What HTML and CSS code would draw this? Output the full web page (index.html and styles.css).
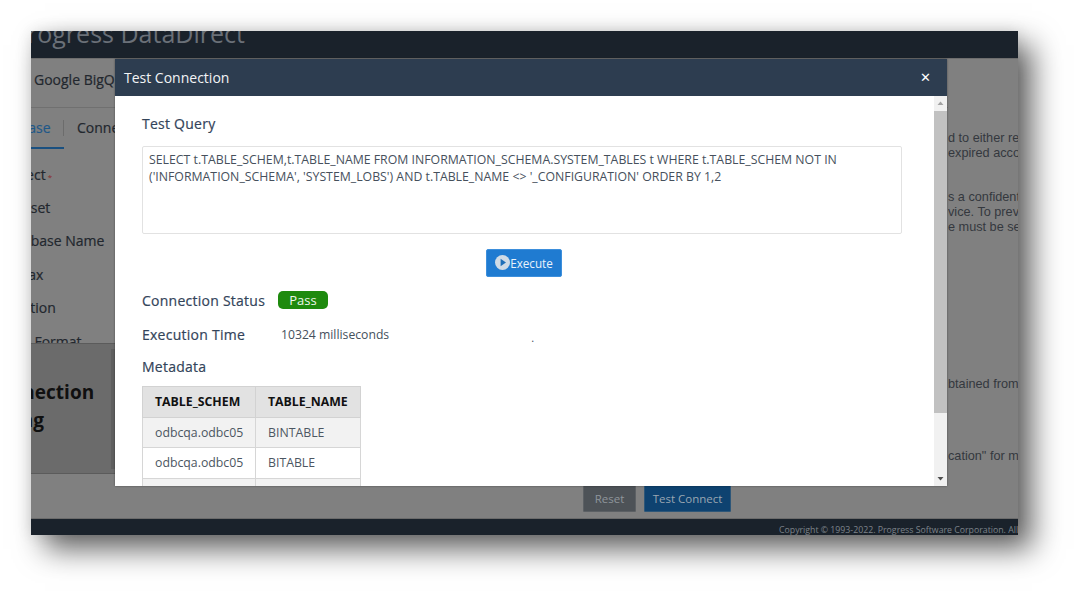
FILE: index.html
```html
<!DOCTYPE html>
<html lang="en">
<head>
<meta charset="utf-8">
<title>Test Connection</title>
<link rel="stylesheet" href="styles.css">
</head>
<body>
<div class="frame">
  <header class="topbar"><span class="brand">Progress DataDirect</span></header>
  <div class="page">
    <div class="columns">
      <div class="left">
        <div class="crumb">Google BigQuery</div>
        <nav class="tabs"><span class="tab active">Database</span><span class="tab">Connection</span></nav>
        <ul class="fields">
          <li>Project<i class="req">*</i></li>
          <li>Dataset</li>
          <li>Database Name</li>
          <li>Syntax</li>
          <li>Location</li>
          <li class="last">Date Format</li>
        </ul>
        <div class="promo"><span class="promo-line">Connection</span><span class="promo-line second">Testing</span></div>
      </div>
      <div class="right">
        <p class="note n1">d to either renew<br>expired accounts</p>
        <p class="note n2">s a confidential<br>vice. To prevent<br>e must be secured</p>
        <p class="note n3">btained from</p>
        <p class="note n4">cation" for more</p>
      </div>
    </div>
    <div class="actions"><button class="btn reset">Reset</button><button class="btn connect">Test Connect</button></div>
  </div>
  <footer class="bottombar">Copyright © 1993-2022. Progress Software Corporation. All rights reserved.</footer>
  <section class="modal">
    <div class="modal-head"><span>Test Connection</span><span class="close">✕</span></div>
    <div class="modal-main">
      <div class="modal-body">
        <h2 class="h-query">Test Query</h2>
        <div class="query">SELECT t.TABLE_SCHEM,t.TABLE_NAME FROM INFORMATION_SCHEMA.SYSTEM_TABLES t WHERE t.TABLE_SCHEM NOT IN ('INFORMATION_SCHEMA', 'SYSTEM_LOBS') AND t.TABLE_NAME &lt;&gt; '_CONFIGURATION' ORDER BY 1,2</div>
        <div class="exec-row">
          <button class="exec">
            <svg class="play" width="15" height="15" viewBox="0 0 15 15"><circle cx="7.5" cy="7.5" r="7.5" fill="#cfdbe6"/><path d="M5.6 3.8 11 7.5 5.6 11.2Z" fill="#1f6fb8"/></svg>Execute
          </button>
        </div>
        <div class="status-row"><h2 class="status-label">Connection Status</h2><span class="badge">Pass</span></div>
        <div class="time-row"><h2 class="time-label">Execution Time</h2><span class="time">10324 milliseconds</span><span class="dot">.</span></div>
        <h2 class="h-meta">Metadata</h2>
        <table class="grid">
          <thead><tr><th>TABLE_SCHEM</th><th>TABLE_NAME</th></tr></thead>
          <tbody>
            <tr><td>odbcqa.odbc05</td><td>BINTABLE</td></tr>
            <tr><td>odbcqa.odbc05</td><td>BITABLE</td></tr>
            <tr><td>odbcqa.odbc05</td><td>BLOBTABLE</td></tr>
          </tbody>
        </table>
      </div>
      <div class="scroll">
        <svg class="arrow" width="13" height="15" viewBox="0 0 13 15"><path d="M3.5 9 6.5 5.5 9.5 9Z" fill="#a3a3a3"/></svg>
        <div class="thumb-track"><div class="thumb"></div></div>
        <svg class="arrow" width="13" height="15" viewBox="0 0 13 15"><path d="M3.5 6 6.5 9.5 9.5 6Z" fill="#505050"/></svg>
      </div>
    </div>
  </section>
</div>
</body>
</html>
```

FILE: styles.css
```css
* { box-sizing: border-box; }
html, body { margin: 0; height: 100%; overflow: hidden; background: #fff; }
body { padding: 31px 0 0 31px; font-family: "Open Sans", sans-serif; }
h2 { margin: 0; font-size: 14px; font-weight: 500; color: #33445a; letter-spacing: .25px; -webkit-text-stroke: .2px #33445a; white-space: nowrap; }
p, ul { margin: 0; padding: 0; }
ul { list-style: none; }

.frame {
  position: relative;
  width: 987px;
  height: 504px;
  display: flex;
  flex-direction: column;
  background: #808080;
  box-shadow: 14px 14px 28px rgba(0,0,0,.62), 0 0 14px rgba(0,0,0,.1);
}
.topbar {
  height: 27px;
  flex: none;
  background: #1a222b;
  overflow: hidden;
}
.brand {
  display: block;
  margin: -16px 0 0 -19px;
  font-size: 25px;
  line-height: 36px;
  color: #6a7078;
  white-space: nowrap;
}
.page {
  flex: 1;
  min-height: 0;
  display: flex;
  flex-direction: column;
  border-top: 1px solid #6e6e6e;
  overflow: hidden;
}
.columns { flex: 1; min-height: 0; display: flex; }
.left { width: 917px; flex: none; display: flex; flex-direction: column; overflow: hidden; }
.crumb {
  flex: none;
  height: 49px;
  padding: 11px 0 0 3px;
  font-size: 14px;
  font-weight: 500;
  -webkit-text-stroke: .2px #22272e;
  line-height: 20px;
  color: #22272e;
  border-bottom: 1px solid #707070;
  white-space: nowrap;
}
.tabs {
  flex: none;
  height: 41px;
  display: flex;
  margin-left: -42px;
  font-size: 14px;
  font-weight: 500;
}
.tab { padding: 10px 14px 0 13px; line-height: 20px; color: #22272e; -webkit-text-stroke: .2px currentColor; white-space: nowrap; }
.tab.active { width: 75px; padding: 10px 0 0 0; color: #1f5888; border-bottom: 2px solid #1a5080; }
.tab + .tab { position: relative; }
.tab + .tab::before { content: ""; position: absolute; left: -1px; top: 12px; width: 1px; height: 16px; background: #6c6c6c; }

.fields {
  height: 194px;
  flex: none;
  margin-left: -31px;
  padding-top: 16px;
  overflow: hidden;
  font-size: 14px;
  font-weight: 500;
  -webkit-text-stroke: .2px #22272e;
  color: #22272e;
}
.fields li { height: 33.2px; line-height: 20px; white-space: nowrap; }
.fields li.last { padding-top: 1px; }
.req { color: #8a2a2a; -webkit-text-stroke: 0; font-style: normal; font-size: 8px; margin-left: 2px; }
.promo {
  position: relative;
  height: 131px;
  flex: none;
  background: #6b6b6b;
  border-top: 1px solid #5b5b5b;
  border-bottom: 1px solid #5b5b5b;
  width: 84px;
  overflow: hidden;
  padding-top: 34px;
  font-size: 19px;
  font-weight: 700;
  line-height: 28px;
  color: #101010;
}
.promo::after { content: ""; position: absolute; right: 0; top: 5px; bottom: 4px; width: 4px; background: #5f5f5f; }
.promo-line { display: block; margin-left: -45px; white-space: nowrap; }
.promo-line.second { margin-left: -56px; }
.right {
  width: 70px;
  flex: none;
  overflow: hidden;
  font-family: "Liberation Sans", Arial, sans-serif;
  font-size: 12.7px;
  line-height: 15px;
  color: #34383e;
  white-space: nowrap;
}
.n1 { margin-top: 72px; }
.n2 { margin-top: 29px; }
.n3 { margin-top: 142px; }
.n4 { margin-top: 57px; }

.actions {
  flex: none;
  height: 44px;
  display: flex;
  gap: 8px;
  padding: 10px 0 0 552px;
  align-items: flex-start;
}
.btn {
  height: 28px;
  border: 1px solid #4b5560;
  border-radius: 1px;
  font-family: inherit;
  font-size: 11.5px;
  padding: 0;
  color: #8f959b;
}
.reset { width: 53px; background: #4d5257; border-color: #5c6064; }
.connect { width: 87px; background: #0e4270; border-color: #2d5678; color: #9aa6b2; }

.bottombar {
  flex: none;
  height: 17px;
  background: #1a222b;
  border-top: 1px solid #6b6b6b;
  overflow: hidden;
  font-size: 8.75px;
  line-height: 22px;
  color: #7d838a;
  padding-left: 748px;
  white-space: nowrap;
}

.modal {
  position: absolute;
  left: 84px;
  top: 28px;
  width: 832px;
  height: 427px;
  display: flex;
  flex-direction: column;
  background: #fff;
  box-shadow: 0 0 2px rgba(0,0,0,.4);
}
.modal-head {
  flex: none;
  height: 37px;
  display: flex;
  justify-content: space-between;
  align-items: center;
  padding: 0 16px 0 9px;
  background: #2d3d50;
  color: #f2f4f6;
  font-size: 14px;
}
.close { font-size: 13px; font-weight: 700; color: #fff; font-family: "DejaVu Sans", sans-serif; }
.modal-main { flex: 1; min-height: 0; display: flex; }
.modal-body { flex: 1; min-width: 0; overflow: hidden; padding: 18px 32px 0 27px; }
.h-query { line-height: 20px; }
.query {
  margin-top: 12px;
  height: 88px;
  padding: 4px 6px;
  border: 1px solid #e2e2e2;
  border-radius: 2px;
  font-size: 12.3px;
  line-height: 17px;
  color: #46505c;
}
.exec-row { margin-top: 15px; display: flex; justify-content: center; padding-left: 4px; }
.exec {
  width: 76px;
  height: 28px;
  display: flex;
  align-items: center;
  justify-content: center;
  padding: 0 0 1px;
  border: 1px solid #3d8fdc;
  border-radius: 2px;
  background: #1f7bd1;
  color: #e9f2fb;
  font-family: inherit;
  font-size: 11.7px;
}
.status-row { margin-top: 12px; display: flex; align-items: center; height: 22px; }
.status-label { width: 136px; flex: none; }
.badge {
  width: 50px;
  height: 18px;
  display: flex;
  align-items: center;
  justify-content: center;
  background: #1e8a0e;
  border-radius: 5px;
  color: #eef7ec;
  font-size: 13px;
}
.time-row { margin-top: 12px; display: flex; align-items: center; height: 22px; }
.time-label { width: 139px; flex: none; }
.time { font-size: 12.2px; color: #46505c; }
.dot { margin-left: 142px; font-size: 11px; color: #46505c; padding-top: 7px; }
.h-meta { margin-top: 12px; line-height: 20px; }
.grid { margin-top: 9px; border-collapse: collapse; font-size: 12.3px; table-layout: fixed; width: 219px; }
.grid th, .grid td { border: 1px solid #d6d6d6; height: 30.5px; padding: 0 0 0 12px; text-align: left; white-space: nowrap; }
.grid th { background: #e2e2e2; color: #111; font-weight: 700; border-color: #d2d2d2; }
.grid th:first-child, .grid td:first-child { width: 113px; }
.grid td { color: #4c5661; }
.grid tbody tr:nth-child(odd) td { background: #f2f2f2; }

.scroll { width: 13px; flex: none; display: flex; flex-direction: column; background: #f1f1f1; }
.arrow { flex: none; display: block; }
.thumb-track { flex: 1; min-height: 0; }
.thumb { height: 302px; background: #c1c1c1; }
```
